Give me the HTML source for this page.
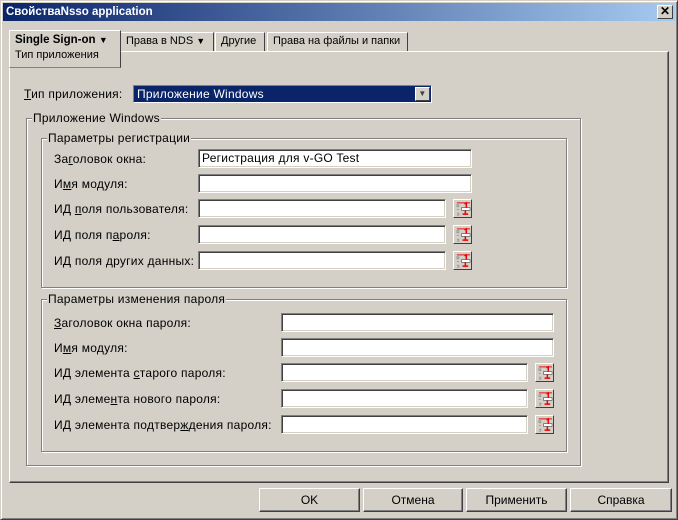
<!DOCTYPE html>
<html><head><meta charset="utf-8"><style>
*{margin:0;padding:0;box-sizing:border-box}
body{width:678px;height:520px;background:#d4d0c8;font:12px "Liberation Sans","DejaVu Sans",sans-serif;color:#000;position:relative;overflow:hidden}
.a{position:absolute;white-space:nowrap;letter-spacing:0.25px}
.win{position:absolute;left:0;top:0;width:678px;height:520px;border:1px solid;border-color:#d4d0c8 #404040 #404040 #d4d0c8;box-shadow:inset 1px 1px #fff,inset -1px -1px #808080}
.title{position:absolute;left:3px;top:3px;width:672px;height:18px;background:linear-gradient(90deg,#0a246a,#a6caf0);color:#fff;font-weight:bold;font-size:11.5px;line-height:18px;padding-left:3px}
.close{position:absolute;left:657px;top:5px;width:16px;height:14px;background:#d4d0c8;border:1px solid;border-color:#fff #404040 #404040 #fff;font:bold 12px/11px "Liberation Sans",sans-serif;text-align:center;color:#000}
.panel{position:absolute;left:9px;top:51px;width:660px;height:432px;border:1px solid;border-color:#fff #404040 #404040 #fff;box-shadow:inset -1px -1px #808080}
.tab{position:absolute;height:19px;border:1px solid;border-bottom:none;border-color:#fff #404040 #404040 #fff;line-height:17px;padding-left:5px;background:#d4d0c8}
.grp{position:absolute;border:1px solid #808080;box-shadow:inset 1px 1px #fff,1px 1px #fff}
.lg{position:absolute;background:#d4d0c8;padding:0 1px;line-height:13px}
.in{position:absolute;height:19px;background:#fff;border:1px solid;border-color:#808080 #fff #fff #808080;box-shadow:inset 1px 1px #404040,inset -1px -1px #d4d0c8;padding-left:3px;line-height:17px;font-size:12px;letter-spacing:0.25px}
.bt{position:absolute;width:19px;height:19px;border:1px solid;border-color:#fff #404040 #404040 #fff;background:#d4d0c8}
.bt svg{position:absolute;left:1px;top:1px}
.btn{position:absolute;top:488px;height:24px;border:1px solid;border-color:#fff #404040 #404040 #fff;box-shadow:inset -1px -1px #808080;text-align:center;line-height:22px}
u{text-decoration:underline}
</style></head><body>
<div class="win"></div>
<div class="title">СвойстваNsso application</div>
<div class="close">✕</div>
<div class="panel"></div>
<div class="tab" style="left:9px;top:30px;width:112px;height:38px;border-bottom:1px solid #808080;z-index:2"><b style="font-size:11.5px">Single Sign-on</b> <span style="font-size:9px">▼</span><div style="line-height:13px;font-size:11px">Тип приложения</div></div>
<div class="tab" style="left:120px;top:32px;width:94px;font-size:11px">Права в NDS <span style="font-size:9px">▼</span></div>
<div class="tab" style="left:215px;top:32px;width:50px;font-size:11px">Другие</div>
<div class="tab" style="left:267px;top:32px;width:141px;font-size:11px">Права на файлы и папки</div>

<div class="a" style="left:24px;top:87px"><u>Т</u>ип приложения:</div>
<div class="a" style="left:133px;top:85px;width:299px;height:18px;background:#0a246a;color:#fff;border:1px solid;border-color:#808080 #fff #fff #808080;line-height:16px;padding-left:3px">Приложение Windows
<div style="position:absolute;right:1px;top:1px;width:15px;height:14px;background:#d4d0c8;border:1px solid;border-color:#fff #404040 #404040 #fff;color:#404040;font-size:8px;line-height:12px;text-align:center">▼</div></div>

<div class="grp" style="left:26px;top:118px;width:555px;height:348px"></div>
<div class="lg a" style="left:32px;top:112px">Приложение Windows</div>
<div class="grp" style="left:41px;top:138px;width:526px;height:150px"></div>
<div class="lg a" style="left:47px;top:132px">Параметры регистрации</div>
<div class="grp" style="left:41px;top:299px;width:526px;height:153px"></div>
<div class="lg a" style="left:47px;top:293px">Параметры изменения пароля</div>

<svg width="0" height="0" style="position:absolute"><defs><symbol id="ic" viewBox="0 0 17 17"><path d="M2 2h14" stroke="#e00" stroke-width="1"/><path d="M2 4h2v2H2zM2 9h2M2 13h2v2H2" stroke="#999" fill="none"/><rect x="7" y="7" width="9" height="3" fill="#fff" stroke="#666" stroke-width="0.8"/><path d="M10 3l2-1v5M11 10v4M8 14h6" stroke="#e00" stroke-width="1.6" fill="none"/></symbol></defs></svg>

<div class="a" style="left:54px;top:152px">За<u>г</u>оловок окна:</div>
<div class="in" style="left:198px;top:149px;width:274px">Регистрация для v-GO Test</div>
<div class="a" style="left:54px;top:177px">И<u>м</u>я модуля:</div>
<div class="in" style="left:198px;top:174px;width:274px"></div>
<div class="a" style="left:54px;top:202px">ИД <u>п</u>оля пользователя:</div>
<div class="in" style="left:198px;top:199px;width:248px"></div><div class="bt" style="left:453px;top:199px"><svg width="16" height="16"><use href="#ic"/></svg></div>
<div class="a" style="left:54px;top:228px">ИД поля п<u>а</u>роля:</div>
<div class="in" style="left:198px;top:225px;width:248px"></div><div class="bt" style="left:453px;top:225px"><svg width="16" height="16"><use href="#ic"/></svg></div>
<div class="a" style="left:54px;top:254px">ИД поля <u>д</u>ругих данных:</div>
<div class="in" style="left:198px;top:251px;width:248px"></div><div class="bt" style="left:453px;top:251px"><svg width="16" height="16"><use href="#ic"/></svg></div>

<div class="a" style="left:54px;top:316px"><u>З</u>аголовок окна пароля:</div>
<div class="in" style="left:281px;top:313px;width:273px"></div>
<div class="a" style="left:54px;top:341px">И<u>м</u>я модуля:</div>
<div class="in" style="left:281px;top:338px;width:273px"></div>
<div class="a" style="left:54px;top:366px">ИД элемента <u>с</u>тарого пароля:</div>
<div class="in" style="left:281px;top:363px;width:247px"></div><div class="bt" style="left:535px;top:363px"><svg width="16" height="16"><use href="#ic"/></svg></div>
<div class="a" style="left:54px;top:392px">ИД элеме<u>н</u>та нового пароля:</div>
<div class="in" style="left:281px;top:389px;width:247px"></div><div class="bt" style="left:535px;top:389px"><svg width="16" height="16"><use href="#ic"/></svg></div>
<div class="a" style="left:54px;top:418px">ИД элемента подтвер<u>ж</u>дения пароля:</div>
<div class="in" style="left:281px;top:415px;width:247px"></div><div class="bt" style="left:535px;top:415px"><svg width="16" height="16"><use href="#ic"/></svg></div>

<div class="btn" style="left:259px;width:101px">OK</div>
<div class="btn" style="left:363px;width:100px">Отмена</div>
<div class="btn" style="left:466px;width:101px">Применить</div>
<div class="btn" style="left:570px;width:102px">Справка</div>
</body></html>
